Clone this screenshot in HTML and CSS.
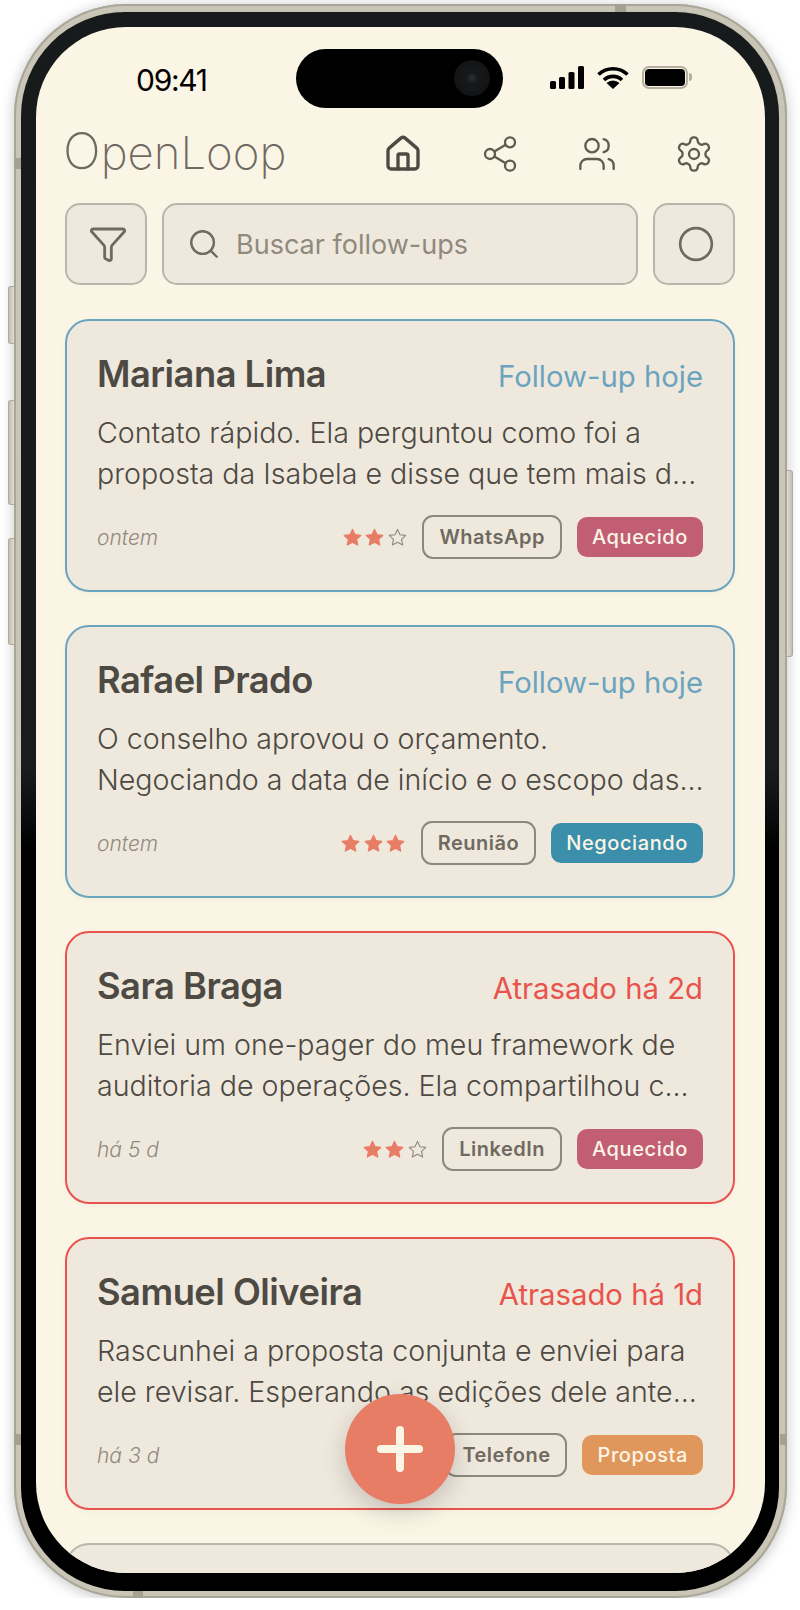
FILE: index.html
```html
<!DOCTYPE html>
<html lang="pt-BR">
<head>
    <meta charset="UTF-8">
    <meta name="viewport" content="width=device-width, initial-scale=1.0">
    <title>OpenLoop</title>
    <link rel="stylesheet" href="styles.css">
</head>
<body>
    <div class="device">
        <span class="side-btn mute"></span>
        <span class="side-btn vol-up"></span>
        <span class="side-btn vol-down"></span>
        <span class="side-btn power"></span>
        <span class="band band-top"></span>
        <span class="band band-left-1"></span>
        <span class="band band-left-2"></span>
        <span class="band band-right"></span>
        <span class="band band-bottom"></span>

        <div class="bezel">
            <div class="screen">
                <div class="island"><span class="camera"></span></div>

                <div class="status-bar">
                    <span class="clock">09:41</span>
                    <div class="status-icons">
                        <svg width="34" height="23" viewBox="0 0 34 23" fill="#000">
                            <rect x="0" y="15" width="6" height="8" rx="1.5"/>
                            <rect x="9" y="11" width="6" height="12" rx="1.5"/>
                            <rect x="18.500" y="6" width="6" height="17" rx="1.500"/>
                            <rect x="28" y="0" width="6" height="23" rx="1.500"/>
                        </svg>
                        <svg width="32" height="23" viewBox="0 0 32 23" fill="none" stroke="#000" stroke-width="3.600">
                            <path d="M1.500 8.500a21 21 0 0 1 29 0"/>
                            <path d="M7 14a13 13 0 0 1 18 0"/>
                            <path d="M16 23l-6.500-6a9.500 9.500 0 0 1 13 0z" fill="#000" stroke="none"/>
                        </svg>
                        <div class="battery"><span class="battery-level"></span></div>
                    </div>
                </div>

                <header class="app-header">
                    <div class="logo"><span class="logo-o">O</span>penLoop</div>
                    <nav class="nav-icons">
                        <svg class="icon icon-active" viewBox="0 0 24 24">
                            <path d="M15 21v-8a1 1 0 0 0-1-1h-4a1 1 0 0 0-1 1v8"/>
                            <path d="M3 10a2 2 0 0 1 .709-1.528l7-5.999a2 2 0 0 1 2.582 0l7 5.999A2 2 0 0 1 21 10v9a2 2 0 0 1-2 2H5a2 2 0 0 1-2-2z"/>
                        </svg>
                        <svg class="icon" viewBox="0 0 24 24">
                            <circle cx="18" cy="5" r="3"/>
                            <circle cx="6" cy="12" r="3"/>
                            <circle cx="18" cy="19" r="3"/>
                            <path d="M8.590 13.510l6.830 3.980M15.410 6.510l-6.820 3.980"/>
                        </svg>
                        <svg class="icon" viewBox="0 0 24 24">
                            <path d="M16 21v-2a4 4 0 0 0-4-4H6a4 4 0 0 0-4 4v2"/>
                            <circle cx="9" cy="7" r="4"/>
                            <path d="M22 21v-2a4 4 0 0 0-3-3.870"/>
                            <path d="M16 3.130a4 4 0 0 1 0 7.750"/>
                        </svg>
                        <svg class="icon" viewBox="0 0 24 24">
                            <path d="M12.220 2h-.44a2 2 0 0 0-2 2v.18a2 2 0 0 1-1 1.730l-.43.250a2 2 0 0 1-2 0l-.15-.08a2 2 0 0 0-2.730.730l-.22.380a2 2 0 0 0 .730 2.730l.15.100a2 2 0 0 1 1 1.720v.51a2 2 0 0 1-1 1.740l-.15.090a2 2 0 0 0-.730 2.730l.22.380a2 2 0 0 0 2.730.730l.15-.08a2 2 0 0 1 2 0l.43.250a2 2 0 0 1 1 1.730V20a2 2 0 0 0 2 2h.44a2 2 0 0 0 2-2v-.18a2 2 0 0 1 1-1.730l.43-.25a2 2 0 0 1 2 0l.15.08a2 2 0 0 0 2.730-.730l.22-.39a2 2 0 0 0-.730-2.730l-.15-.08a2 2 0 0 1-1-1.740v-.5a2 2 0 0 1 1-1.740l.15-.09a2 2 0 0 0 .730-2.730l-.22-.38a2 2 0 0 0-2.730-.730l-.15.08a2 2 0 0 1-2 0l-.43-.25a2 2 0 0 1-1-1.730V4a2 2 0 0 0-2-2z"/>
                            <circle cx="12" cy="12" r="3"/>
                        </svg>
                    </nav>
                </header>

                <div class="toolbar">
                    <button class="tool-btn">
                        <svg class="icon icon-tool" viewBox="0 0 24 24">
                            <path d="M10 20a1 1 0 0 0 .553.895l2 1A1 1 0 0 0 14 21v-7a2 2 0 0 1 .517-1.341L21.740 4.670A1 1 0 0 0 21 3H3a1 1 0 0 0-.742 1.670l7.225 7.989A2 2 0 0 1 10 14z"/>
                        </svg>
                    </button>
                    <div class="search-box">
                        <svg class="icon icon-tool icon-search" viewBox="0 0 24 24">
                            <circle cx="11" cy="11" r="8"/>
                            <path d="M21 21l-4.300-4.300"/>
                        </svg>
                        <span class="search-placeholder">Buscar follow-ups</span>
                    </div>
                    <button class="tool-btn">
                        <svg class="icon icon-tool icon-circle" viewBox="0 0 24 24"><circle cx="12" cy="12" r="10"/></svg>
                    </button>
                </div>

                <div class="card-list">
                    <div class="card card-today">
                        <div class="card-top">
                            <h2 class="card-name">Mariana Lima</h2>
                            <span class="card-status">Follow-up hoje</span>
                        </div>
                        <p class="card-text">Contato rápido. Ela perguntou como foi a<br>proposta da Isabela e disse que tem mais d...</p>
                        <div class="card-foot">
                            <span class="card-time">ontem</span>
                            <span class="stars">
                                <svg class="star" viewBox="0 0 24 24"><path d="M12 2.800l2.900 6 6.500.8-4.800 4.500 1.300 6.500-5.900-3.300-5.900 3.300 1.300-6.500-4.800-4.500 6.500-.8z"/></svg>
                                <svg class="star" viewBox="0 0 24 24"><path d="M12 2.800l2.900 6 6.500.8-4.800 4.500 1.300 6.500-5.900-3.300-5.900 3.300 1.300-6.500-4.800-4.500 6.500-.8z"/></svg>
                                <svg class="star star-empty" viewBox="0 0 24 24"><path d="M12 2.800l2.900 6 6.500.8-4.800 4.500 1.300 6.500-5.900-3.300-5.900 3.300 1.300-6.500-4.800-4.500 6.500-.8z"/></svg>
                            </span>
                            <span class="chip">WhatsApp</span>
                            <span class="tag tag-warm">Aquecido</span>
                        </div>
                    </div>

                    <div class="card card-today">
                        <div class="card-top">
                            <h2 class="card-name">Rafael Prado</h2>
                            <span class="card-status">Follow-up hoje</span>
                        </div>
                        <p class="card-text">O conselho aprovou o orçamento.<br>Negociando a data de início e o escopo das...</p>
                        <div class="card-foot">
                            <span class="card-time">ontem</span>
                            <span class="stars">
                                <svg class="star" viewBox="0 0 24 24"><path d="M12 2.800l2.900 6 6.500.8-4.800 4.500 1.300 6.500-5.900-3.300-5.900 3.300 1.300-6.500-4.800-4.500 6.500-.8z"/></svg>
                                <svg class="star" viewBox="0 0 24 24"><path d="M12 2.800l2.900 6 6.500.8-4.800 4.500 1.300 6.500-5.900-3.300-5.900 3.300 1.300-6.500-4.800-4.500 6.500-.8z"/></svg>
                                <svg class="star" viewBox="0 0 24 24"><path d="M12 2.800l2.900 6 6.500.8-4.800 4.500 1.300 6.500-5.900-3.300-5.900 3.300 1.300-6.500-4.800-4.500 6.500-.8z"/></svg>
                            </span>
                            <span class="chip">Reunião</span>
                            <span class="tag tag-deal">Negociando</span>
                        </div>
                    </div>

                    <div class="card card-late">
                        <div class="card-top">
                            <h2 class="card-name">Sara Braga</h2>
                            <span class="card-status">Atrasado há 2d</span>
                        </div>
                        <p class="card-text">Enviei um one-pager do meu framework de<br>auditoria de operações. Ela compartilhou c...</p>
                        <div class="card-foot">
                            <span class="card-time">há 5 d</span>
                            <span class="stars">
                                <svg class="star" viewBox="0 0 24 24"><path d="M12 2.800l2.900 6 6.500.8-4.800 4.500 1.300 6.500-5.900-3.300-5.900 3.300 1.300-6.500-4.800-4.500 6.500-.8z"/></svg>
                                <svg class="star" viewBox="0 0 24 24"><path d="M12 2.800l2.900 6 6.500.8-4.800 4.500 1.300 6.500-5.900-3.300-5.900 3.300 1.300-6.500-4.800-4.500 6.500-.8z"/></svg>
                                <svg class="star star-empty" viewBox="0 0 24 24"><path d="M12 2.800l2.900 6 6.500.8-4.800 4.500 1.300 6.500-5.900-3.300-5.900 3.300 1.300-6.500-4.800-4.500 6.500-.8z"/></svg>
                            </span>
                            <span class="chip">LinkedIn</span>
                            <span class="tag tag-warm">Aquecido</span>
                        </div>
                    </div>

                    <div class="card card-late">
                        <div class="card-top">
                            <h2 class="card-name">Samuel Oliveira</h2>
                            <span class="card-status">Atrasado há 1d</span>
                        </div>
                        <p class="card-text">Rascunhei a proposta conjunta e enviei para<br>ele revisar. Esperando as edições dele ante...</p>
                        <div class="card-foot">
                            <span class="card-time">há 3 d</span>
                            <span class="chip">Telefone</span>
                            <span class="tag tag-offer">Proposta</span>
                        </div>
                    </div>

                    <div class="card"></div>
                </div>

                <button class="fab">
                    <svg width="46" height="46" viewBox="0 0 46 46" fill="none" stroke="#fbf5e6" stroke-width="8" stroke-linecap="round">
                        <path d="M23 4v38M4 23h38"/>
                    </svg>
                </button>
            </div>
        </div>
    </div>
</body>
</html>
```

FILE: styles.css
```css
body {
    font-family: Inter, "Liberation Sans", sans-serif;
    margin: 0;
    padding: 0;
    background-color: #fff;
    color: #4d4943;
}

.device {
    position: relative;
    width: 773px;
    height: 1594px;
    margin: 4px 0 0 14px;
    padding: 8px 8px 7px 7px;
    box-sizing: border-box;
    border-radius: 112px;
    background: #c3c0b1;
    box-shadow: 0 2px 14px rgba(0, 0, 0, 0.24), inset 0 0 0 2px #a9a698, inset 0 0 0 7px #c9c6b8;
}

.bezel {
    height: 100%;
    padding: 15px 14px 18px 15px;
    box-sizing: border-box;
    border-radius: 104px;
    background: linear-gradient(#171a1b, #191c1d 48%, #000 53%);
}

.screen {
    position: relative;
    height: 1546px;
    padding: 0 30px 0 29px;
    box-sizing: border-box;
    border-radius: 90px;
    background-color: #fbf5e6;
    overflow: hidden;
}

/* frame details */
.side-btn {
    position: absolute;
    width: 6px;
    box-sizing: border-box;
    border: 1px solid #aeab9e;
    border-right: none;
    background: linear-gradient(90deg, #c2bfb4, #dedbd1);
    border-radius: 3px 0 0 3px;
}

.mute { left: -6px; top: 282px; height: 58px; }
.vol-up { left: -6px; top: 396px; height: 105px; }
.vol-down { left: -6px; top: 534px; height: 107px; }
.power { right: -6px; top: 466px; height: 187px; transform: scaleX(-1); }

.band {
    position: absolute;
    background-color: #a4a193;
}

.band-top { top: 0; left: 601px; width: 11px; height: 8px; }
.band-left-1 { left: 0; top: 154px; width: 7px; height: 11px; }
.band-left-2 { left: 0; top: 1430px; width: 7px; height: 11px; }
.band-right { right: 0; top: 1430px; width: 7px; height: 11px; }
.band-bottom { bottom: 0; left: 119px; width: 10px; height: 7px; }

.island {
    position: absolute;
    top: 22px;
    left: 260px;
    width: 207px;
    height: 59px;
    border-radius: 30px;
    background-color: #000;
}

.camera {
    position: absolute;
    top: 11px;
    right: 13px;
    width: 36px;
    height: 36px;
    border-radius: 50%;
    background: radial-gradient(#2a2c2d 0, #2a2c2d 6%, #17191a 20%, #121415 65%, #0a0b0c 100%);
}

/* status bar */
.status-bar {
    display: flex;
    justify-content: space-between;
    align-items: center;
    height: 100px;
    padding: 0 47px 0 71px;
}

.clock {
    margin-top: 5px;
    font-size: 30px;
    font-weight: 400;
    letter-spacing: -1.3px;
    color: #000;
}

.status-icons {
    display: flex;
    align-items: center;
    gap: 13px;
}

.battery {
    position: relative;
    width: 46px;
    height: 23px;
    padding: 1px;
    box-sizing: border-box;
    border: 2px solid #b3ae9e;
    border-radius: 7px;
}

.battery::after {
    content: "";
    position: absolute;
    right: -6px;
    top: 5px;
    width: 3px;
    height: 8px;
    border-radius: 0 3px 3px 0;
    background-color: #b3ae9e;
}

.battery-level {
    display: block;
    height: 100%;
    border-radius: 4px;
    background-color: #000;
}

/* header */
.app-header {
    display: flex;
    justify-content: space-between;
    align-items: center;
    height: 54px;
    padding-right: 21px;
}

.logo {
    margin: -7px 0 0 -2px;
    font-size: 45.500px;
    font-weight: 200;
    color: #6f6a60;
}

.logo-o {
    font-size: 50px;
}

.nav-icons {
    display: flex;
    gap: 57px;
    margin-left: 1px;
}

.icon {
    display: block;
    width: 40px;
    height: 40px;
    fill: none;
    stroke: #5f5b52;
    stroke-width: 1.4;
    stroke-linecap: round;
    stroke-linejoin: round;
}

.icon-active {
    stroke: #4d4943;
    stroke-width: 2;
}

.icon-tool {
    stroke: #6f6a60;
    stroke-width: 1.7;
}

/* filter row */
.toolbar {
    display: flex;
    gap: 15px;
    margin-top: 22px;
    margin-bottom: 34px;
}

.tool-btn {
    display: flex;
    justify-content: center;
    align-items: center;
    flex: none;
    width: 82px;
    height: 82px;
    padding: 0 0 0 3px;
    box-sizing: border-box;
    border: 2px solid #b9b6ae;
    border-radius: 15px;
    background-color: #efe8dd;
}

.icon-circle {
    width: 38px;
    height: 38px;
}

.search-box {
    flex: 1;
    display: flex;
    align-items: center;
    gap: 15px;
    padding-left: 23px;
    border: 2px solid #b9b6ae;
    border-radius: 15px;
    background-color: #efe8dd;
}

.icon-search {
    width: 34px;
    height: 34px;
}

.search-placeholder {
    font-size: 27px;
    font-weight: 400;
    color: #8f8a7e;
}

/* cards */
.card-list {
    display: flex;
    flex-direction: column;
    gap: 33px;
}

.card {
    flex: none;
    height: 273px;
    padding: 30px 30px 0;
    box-sizing: border-box;
    border: 2px solid #b9b6ae;
    border-radius: 24px;
    background-color: #efe8dd;
    box-shadow: 0 2px 6px rgba(0, 0, 0, 0.03);
}

.card-today { border-color: #6ba4be; }
.card-late { border-color: #e8544b; }

.card-top {
    display: flex;
    justify-content: space-between;
    align-items: center;
    height: 46px;
}

.card-name {
    margin: 0;
    font-size: 36.300px;
    font-weight: 600;
    letter-spacing: -0.5px;
    color: #4d4943;
}

.card-status {
    margin-top: 5px;
    font-size: 29.300px;
    font-weight: 400;
}

.card-today .card-status { color: #6ba4be; }
.card-late .card-status { color: #e8544b; }

.card-text {
    margin: 15px 0 0;
    font-size: 28.600px;
    font-weight: 300;
    line-height: 41px;
    white-space: nowrap;
    color: #4d4943;
}

.card-foot {
    display: flex;
    align-items: center;
    gap: 15px;
    margin-top: 21px;
}

.card-time {
    flex: 1;
    font-size: 21px;
    font-weight: 300;
    font-style: italic;
    color: #8f8a7e;
}

.stars {
    display: flex;
    gap: 1.500px;
    margin-right: -0.500px;
}

.star {
    display: block;
    width: 21px;
    height: 21px;
    fill: #e87d65;
    stroke: #e87d65;
    stroke-width: 1.500;
    stroke-linejoin: round;
}

.star-empty {
    fill: none;
    stroke: #8f8a7e;
    stroke-width: 1.300;
}

.chip {
    padding: 0 15px;
    height: 40px;
    line-height: 40px;
    border: 2px solid #8d887c;
    border-radius: 11px;
    font-size: 20px;
    font-weight: 600;
    letter-spacing: 0.5px;
    color: #6f6a60;
}

.tag {
    padding: 0 15px;
    height: 40px;
    line-height: 40px;
    border-radius: 10px;
    font-size: 20px;
    font-weight: 500;
    letter-spacing: 0.6px;
    color: #fbf5e6;
}

.tag-warm { background-color: #c25e74; }
.tag-deal { background-color: #3b8fab; }
.tag-offer { background-color: #e0975c; }

.fab {
    position: absolute;
    left: 309px;
    top: 1367px;
    display: flex;
    justify-content: center;
    align-items: center;
    width: 110px;
    height: 110px;
    padding: 0;
    border: none;
    border-radius: 50%;
    background-color: #e87d65;
    box-shadow: 0 8px 24px rgba(0, 0, 0, 0.18);
}
```
